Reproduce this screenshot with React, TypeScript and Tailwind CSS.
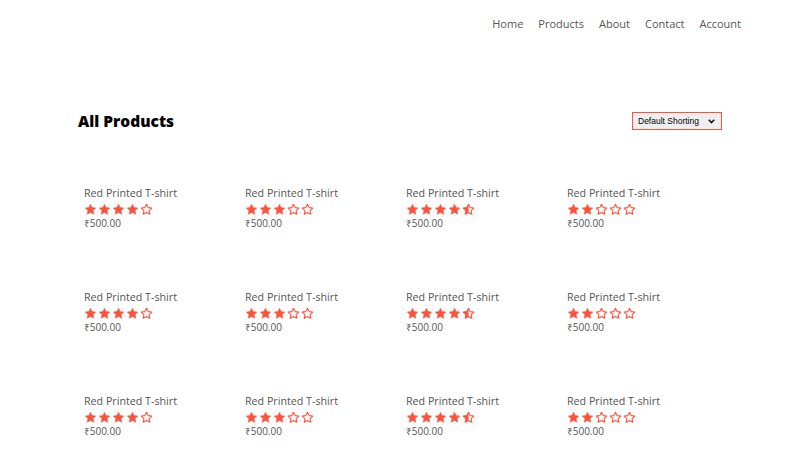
import React from "react";

const RED = "#ff523b";

function Star({ kind }: { kind: "full" | "half" | "empty" }) {
  const d =
    "M12 2.2l2.95 6.3 6.85.8-5.05 4.7 1.35 6.8L12 17.4l-6.1 3.4 1.35-6.8L2.2 9.3l6.85-.8z";
  return (
    <svg width="13" height="13" viewBox="0 0 24 24" className="block">
      {kind === "full" && <path d={d} fill={RED} stroke={RED} strokeWidth="1" strokeLinejoin="round" />}
      {kind === "empty" && (
        <path d={d} fill="none" stroke={RED} strokeWidth="2" strokeLinejoin="round" />
      )}
      {kind === "half" && (
        <>
          <defs>
            <clipPath id="halfclip">
              <rect x="0" y="0" width="12" height="24" />
            </clipPath>
          </defs>
          <path d={d} fill="none" stroke={RED} strokeWidth="2" strokeLinejoin="round" />
          <path d={d} fill={RED} clipPath="url(#halfclip)" />
        </>
      )}
    </svg>
  );
}

function Stars({ rating }: { rating: number }) {
  const items: ("full" | "half" | "empty")[] = [];
  for (let i = 1; i <= 5; i++) {
    if (rating >= i) items.push("full");
    else if (rating >= i - 0.5) items.push("half");
    else items.push("empty");
  }
  return (
    <div className="flex items-center gap-[1px] h-[14px] mt-[1px]">
      {items.map((k, i) => (
        <Star key={i} kind={k} />
      ))}
    </div>
  );
}

const ratings = [4, 3, 4.5, 2];

function Card({ rating }: { rating: number }) {
  return (
    <div className="px-[6px] h-[84px]">
      <div className="h-[40px]" />
      <div className="text-[10.7px] leading-[16px] text-[#555]">Red Printed T-shirt</div>
      <Stars rating={rating} />
      <div className="text-[10px] leading-[12px] mt-[1px] text-[#555]">₹500.00</div>
    </div>
  );
}

export default function App() {
  const cards = [...ratings, ...ratings, ...ratings];
  return (
    <div
      className="w-full min-h-[450px] bg-white"
      style={{ fontFamily: '"Open Sans", "Noto Sans", sans-serif' }}
    >
      <header className="flex justify-end pr-[59px] pt-[16px] h-[46px]">
        <nav className="flex gap-[15px] text-[11px] leading-[16px] text-[#555]">
          <span>Home</span>
          <span>Products</span>
          <span>About</span>
          <span>Contact</span>
          <span>Account</span>
        </nav>
      </header>
      <main className="px-[78px]">
        <div className="flex items-center justify-between mt-[64px] h-[22px]">
          <h2 className="text-[15.5px] font-extrabold text-black leading-[22px]">All Products</h2>
          <div className="relative w-[90px] h-[18px]">
            <select
              className="block appearance-none w-full h-[18px] leading-[16px] border border-[#ff523b] bg-[#efefef] text-[8.5px] text-black pl-[5px] pr-[14px] py-0 outline-none"
              style={{ fontFamily: '"Liberation Sans", Arial, sans-serif' }}
              defaultValue="Default Shorting"
            >
              <option>Default Shorting</option>
              <option>Short by price</option>
              <option>Short by popularity</option>
            </select>
            <svg
              width="7"
              height="5"
              viewBox="0 0 7 5"
              className="absolute right-[7px] top-[7px] pointer-events-none"
            >
              <path d="M0.8 0.8 L3.5 3.6 L6.2 0.8" fill="none" stroke="#111" strokeWidth="1.6" />
            </svg>
          </div>
        </div>
        <div className="grid grid-cols-4 gap-y-[20px] mt-[13px]">
          {cards.map((r, i) => (
            <Card key={i} rating={r} />
          ))}
        </div>
      </main>
    </div>
  );
}
